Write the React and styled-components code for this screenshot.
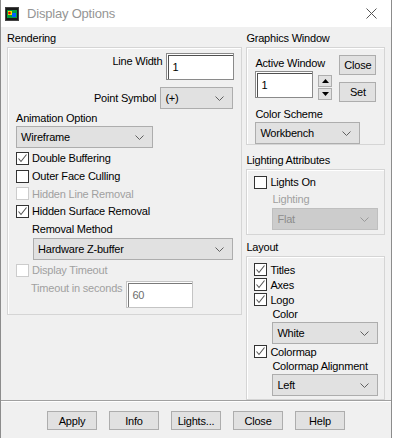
import styled, { createGlobalStyle } from "styled-components";

const Global = createGlobalStyle`
  html, body { margin: 0; padding: 0; background: #ffffff; }
  body {
    font-family: "Liberation Sans", "DejaVu Sans", sans-serif;
    font-size: 11px;
    letter-spacing: -0.2px;
    color: #000;
  }
`

const Window = styled.div`
  width: 392px;
  height: 438px;
  background: #f0f0f0;
  border-left: 1px solid #8c8c8c;
  border-right: 1px solid #8c8c8c;
  box-sizing: border-box;
  display: flex;
  flex-direction: column;
`
const TitleBar = styled.div`
  height: 27px;
  background: #ffffff;
  display: flex;
  align-items: center;
  padding-left: 4px;
  gap: 8px;
`
const Title = styled.div`
  font-size: 13px;
  color: #959595;
  flex: 1;
`
const CloseX = styled.div`
  width: 40px;
  height: 27px;
  display: flex;
  align-items: center;
  justify-content: center;
`
const Body = styled.div`
  display: flex;
  padding: 0 6px;
  gap: 4px;
`
const Column = styled.div`
  display: flex;
  flex-direction: column;
  width: ${p => p.w}px;
`
const GroupLabel = styled.div`
  line-height: 15px;
  margin-top: ${p => p.top || 4}px;
  margin-bottom: 1px;
  white-space: nowrap;
`
const Box = styled.div`
  border: 1px solid #d5d5d5;
  box-shadow: inset 1px 1px 0 #ffffff;
  height: ${p => p.h}px;
  box-sizing: border-box;
  padding: ${p => p.pad || "0"};
  display: flex;
  flex-direction: column;
`
const FieldRow = styled.div`
  display: flex;
  align-items: ${p => p.align || "flex-start"};
  justify-content: ${p => p.justify || "flex-start"};
  gap: ${p => p.gap || 4}px;
  margin-top: ${p => p.top || 0}px;
  margin-left: ${p => p.left || 0}px;
  margin-right: ${p => p.right || 0}px;
`
const Label = styled.div`
  line-height: 15px;
  white-space: nowrap;
  color: ${p => (p.off ? "#a0a0a0" : "#000")};
  margin-top: ${p => p.top || 0}px;
  margin-left: ${p => p.left || 0}px;
`
const TextInput = styled.div`
  width: ${p => p.w}px;
  height: ${p => p.h || 27}px;
  box-sizing: border-box;
  background: #fff;
  border: 1px solid ${p => (p.off ? "#c4c4c4" : "#8a8a8a")};
  box-shadow: inset 1px 1px 0 #ffffff, inset 2px 2px 0 ${p => (p.off ? "#7a7a7a" : "#505050")};
  padding: 6px 0 0 5px;
  line-height: 15px;
  color: ${p => (p.off ? "#6d6d6d" : "#000")};
`
const Select = styled.div`
  width: ${p => p.w}px;
  height: 22px;
  box-sizing: border-box;
  background: ${p => (p.off ? "#cccccc" : "#e1e1e1")};
  border: 1px solid ${p => (p.off ? "#bfbfbf" : "#adadad")};
  display: flex;
  align-items: center;
  justify-content: space-between;
  padding: 0 8px 0 4px;
  margin-top: ${p => p.top || 0}px;
  margin-left: ${p => p.left || 0}px;
  color: ${p => (p.off ? "#8d8d8d" : "#000")};
`
const Button = styled.div`
  width: ${p => p.w || 50}px;
  height: ${p => p.h || 19}px;
  box-sizing: border-box;
  background: #e1e1e1;
  border: 1px solid #adadad;
  display: flex;
  align-items: center;
  justify-content: center;
`
const SpinStack = styled.div`
  margin-top: 4px;
  display: flex;
  flex-direction: column;
  gap: 1px;
`
const SpinButton = styled.div`
  width: 14px;
  height: 12px;
  box-sizing: border-box;
  background: #e1e1e1;
  border: 1px solid #adadad;
  display: flex;
  align-items: center;
  justify-content: center;
`
const ButtonStack = styled.div`
  display: flex;
  flex-direction: column;
  gap: 7px;
  margin-top: 1px;
`
const CheckRow = styled.div`
  display: flex;
  align-items: center;
  gap: 3px;
  height: ${p => p.h || 18}px;
  margin-left: ${p => p.left || 0}px;
  color: ${p => (p.off ? "#a0a0a0" : "#000")};
`
const Box13 = styled.div`
  width: 13px;
  height: 13px;
  box-sizing: border-box;
  background: #fff;
  border: 1px solid ${p => (p.off ? "#cccccc" : "#333333")};
  display: flex;
  align-items: center;
  justify-content: center;
`
const Spacer = styled.div`
  height: ${p => p.h}px;
`
const Footer = styled.div`
  margin-top: auto;
  border-top: 1px solid #a0a0a0;
  box-shadow: inset 0 1px 0 #ffffff;
  height: 31px;
  display: flex;
  align-items: flex-start;
  padding: 10px 0 0 46px;
  gap: 12px;
`

function Chevron({ off }) {
  return (
    <svg width="9" height="5" viewBox="0 0 9 5">
      <polyline points="0.5,0.5 4.5,4.5 8.5,0.5" fill="none" stroke={off ? "#9a9a9a" : "#606060"} strokeWidth="1" />
    </svg>
  )
}

function Check({ checked, off, label, left, h }) {
  return (
    <CheckRow off={off} left={left} h={h}>
      <Box13 off={off}>
        {checked && (
          <svg width="11" height="11" viewBox="0 0 11 11">
            <polyline points="1.5,5.5 4,8.5 9.5,1.5" fill="none" stroke="#555" strokeWidth="1.1" />
          </svg>
        )}
      </Box13>
      {label}
    </CheckRow>
  )
}

function Dropdown({ w, value, off, top, left }) {
  return (
    <Select w={w} off={off} top={top} left={left}>
      <span>{value}</span>
      <Chevron off={off} />
    </Select>
  )
}

function AppIcon() {
  return (
    <svg width="14" height="14" viewBox="0 0 14 14">
      <rect x="0.5" y="0.5" width="13" height="13" fill="#1a1a1a" stroke="#444" />
      <rect x="2" y="3" width="10" height="8" fill="#00a040" />
      <rect x="3" y="4" width="4" height="4" fill="#ffe000" />
      <rect x="7" y="6" width="4" height="4" fill="#0060ff" />
      <circle cx="4.5" cy="6" r="1.3" fill="#e00000" />
    </svg>
  )
}

export default function App() {
  return (
    <Window>
      <Global />
      <TitleBar>
        <AppIcon />
        <Title>Display Options</Title>
        <CloseX>
          <svg width="11" height="11" viewBox="0 0 11 11">
            <path d="M0.5 0.5 L10.5 10.5 M10.5 0.5 L0.5 10.5" stroke="#555" strokeWidth="1" />
          </svg>
        </CloseX>
      </TitleBar>

      <Body>
        <Column w={236}>
          <GroupLabel>Rendering</GroupLabel>
          <Box h={268} pad="5px 0 0 7px">
            <FieldRow gap={4} justify="flex-end" right={7}>
              <Label top={1}>Line Width</Label>
              <TextInput w={68}>1</TextInput>
            </FieldRow>
            <FieldRow gap={4} top={7} justify="flex-end" right={8} align="center">
              <Label>Point Symbol</Label>
              <Dropdown w={73} value="(+)" />
            </FieldRow>
            <Label top={2} left={1}>Animation Option</Label>
            <Dropdown w={137} value="Wireframe" top={0} left={1} />
            <Spacer h={1} />
            <Check checked label="Double Buffering" left={1} />
            <Check label="Outer Face Culling" left={1} />
            <Check off label="Hidden Line Removal" left={1} h={17} />
            <Check checked label="Hidden Surface Removal" left={1} h={18} />
            <Label left={17} top={2}>Removal Method</Label>
            <Dropdown w={200} value="Hardware Z-buffer" top={1} left={18} />
            <Spacer h={1} />
            <Check off label="Display Timeout" left={1} />
            <FieldRow gap={4} left={16} top={2}>
              <Label off top={0}>Timeout in seconds</Label>
              <TextInput off w={67}>60</TextInput>
            </FieldRow>
          </Box>
        </Column>

        <Column w={139}>
          <GroupLabel>Graphics Window</GroupLabel>
          <Box h={98} pad="6px 0 0 8px">
            <FieldRow gap={7}>
              <div>
                <Label top={2}>Active Window</Label>
                <FieldRow gap={5}>
                  <TextInput w={58}>1</TextInput>
                  <SpinStack>
                    <SpinButton>
                      <svg width="7" height="4" viewBox="0 0 7 4"><polygon points="0,4 7,4 3.5,0" fill="#000" /></svg>
                    </SpinButton>
                    <SpinButton>
                      <svg width="7" height="4" viewBox="0 0 7 4"><polygon points="0,0 7,0 3.5,4" fill="#000" /></svg>
                    </SpinButton>
                  </SpinStack>
                </FieldRow>
              </div>
              <ButtonStack>
                <Button w={37} h={20}>Close</Button>
                <Button w={37} h={20}>Set</Button>
              </ButtonStack>
            </FieldRow>
            <Label top={5}>Color Scheme</Label>
            <Dropdown w={105} value="Workbench" top={0} />
          </Box>

          <GroupLabel top={8}>Lighting Attributes</GroupLabel>
          <Box h={66} pad="3px 0 0 7px">
            <Check label="Lights On" h={18} />
            <Label off left={18} top={1}>Lighting</Label>
            <Dropdown off w={106} value="Flat" top={1} left={18} />
          </Box>

          <GroupLabel top={5}>Layout</GroupLabel>
          <Box h={144} pad="5px 0 0 7px">
            <Check checked label="Titles" h={15} />
            <Check checked label="Axes" h={15} />
            <Check checked label="Logo" h={15} />
            <Label left={18}>Color</Label>
            <Dropdown w={106} value="White" top={0} left={18} />
            <Check checked label="Colormap" h={15} />
            <Label left={18}>Colormap Alignment</Label>
            <Dropdown w={106} value="Left" top={0} left={18} />
          </Box>
        </Column>
      </Body>

      <Footer>
        <Button w={50}>Apply</Button>
        <Button w={50}>Info</Button>
        <Button w={50}>Lights...</Button>
        <Button w={50}>Close</Button>
        <Button w={50}>Help</Button>
      </Footer>
    </Window>
  )
}
